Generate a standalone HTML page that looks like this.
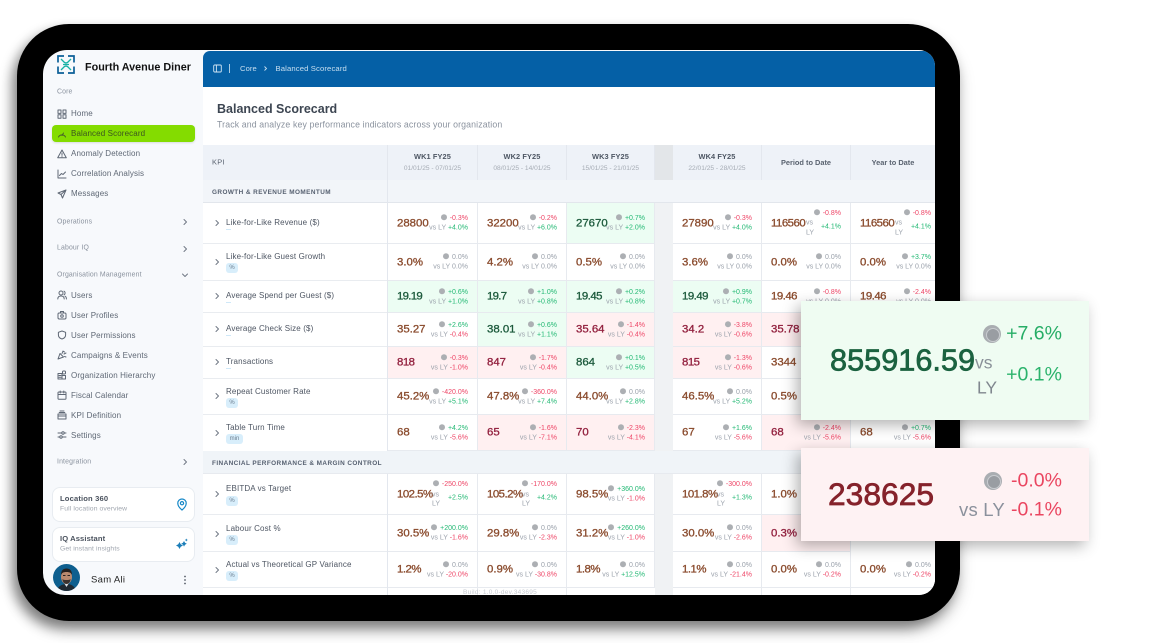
<!DOCTYPE html>
<html lang="en"><head><meta charset="utf-8"><title>Balanced Scorecard</title>
<style>
*{box-sizing:border-box}
html,body{margin:0;padding:0;background:#fff}
body{width:1163px;height:643px;overflow:hidden;position:relative;font-family:"Liberation Sans",sans-serif}
.abs,.frame,.screen,.t,.c,.v,.l,.card,.pop{position:absolute}
.frame{left:17px;top:24px;width:943px;height:597px;background:#000;border-radius:52px;box-shadow:-5px 7px 12px rgba(0,0,0,.42),0 10px 16px rgba(0,0,0,.18)}
.screen{left:43px;top:50px;width:892px;height:545px;background:#f7f9fc;border-radius:24px 16px 16px 22px;overflow:hidden;filter:blur(.3px)}
.bl{position:absolute;left:0;top:0;width:1163px;height:643px;filter:blur(.35px)}
.in{position:absolute;left:-43px;top:-50px;width:1163px;height:643px}
.t{white-space:nowrap;line-height:1;transform:translateY(-50%)}
.nav{font-size:8px;color:#5f6875;left:71px;letter-spacing:.12px;margin-top:.6px}
.sec{font-size:6.9px;color:#8a929e;left:57px;letter-spacing:.15px;margin-top:1.6px}
svg.i{position:absolute;fill:none;stroke:#5f6875;stroke-width:1;stroke-linecap:round;stroke-linejoin:round;width:10px;height:10px;left:57px}
svg.ch{position:absolute;fill:none;stroke:#717985;stroke-width:1;stroke-linecap:round;stroke-linejoin:round;width:8px;height:8px}
.card{left:52px;width:143px;height:35px;background:#fff;border:1px solid #e8ecf1;border-radius:8px}
.c{background:#fff;border-right:1px solid #e7eaef;border-bottom:1px solid #e7eaef}
.G{background:#ecfdf3}.R{background:#fff0f1}
.v{left:9px;top:50%;margin-top:.5px;transform:translateY(-50%);font-size:11.4px;font-weight:normal;-webkit-text-stroke:.32px currentColor;color:#8a4b2d;line-height:1;white-space:nowrap}
.G .v{color:#1c5a3c}.R .v{color:#93213f}
.v.o{letter-spacing:-.5px}
.l{right:9px;transform:translateY(-50%);font-size:7px;line-height:1;white-space:nowrap;color:#9aa1ab}
.a{top:calc(50% - 5px)}.b{top:calc(50% + 5px)}
.l b{font-weight:normal}.l i{display:inline-block;width:6px;height:6px;border-radius:50%;background:#acafb3;margin-right:3px;vertical-align:-.5px}
.n{color:#a0a6af}.g{color:#22b873}.r{color:#ee4566}
.w .a{top:calc(50% - 10px)}.w .b{top:calc(50% + 4px)}
.ly{transform:translateY(-50%);position:absolute;font-size:7px;color:#9aa1ab;line-height:1;left:44px}
.hd{background:#eef2f8;border-right:1px solid #e3e7ee;text-align:center;top:145px;height:35px}
.hd p{margin:0;position:absolute;left:0;right:0;line-height:1}
.h1{font-size:7.4px;font-weight:bold;color:#4d5663;top:8px;letter-spacing:.1px}
.h2{font-size:6.6px;color:#a6acb5;top:21px}
.h3{font-size:7.4px;font-weight:bold;color:#5a6370;top:14px}
.kpi{font-size:8px;color:#4e5663;left:226px;letter-spacing:.14px;margin-top:.5px}
.badge{position:absolute;left:226px;width:12px;height:10px;border-radius:3px;background:#d8eefb;color:#6a7c8e;font-size:6px;line-height:10px;text-align:center}
.sl{position:absolute;left:226px;width:5px;height:1px;background:#cfe8f8}
.gh{font-size:6.4px;font-weight:bold;color:#566070;left:212px;letter-spacing:.43px;margin-top:1px}
.pop{left:801px;width:288px;box-shadow:-4px 5px 14px rgba(0,0,0,.3)}
.pv{font-weight:normal;-webkit-text-stroke:.7px currentColor;line-height:1}
.pd{width:18px;height:18px;border-radius:50%;background:#a9adb1;position:absolute}
.pd:after{content:"";position:absolute;left:3px;top:3px;width:12px;height:12px;border-radius:50%;border:1.5px solid #c9ccd0;background:#999da2}
</style></head><body>
<div class="frame"></div>
<div class="screen"><div class="in">

<!-- logo -->
<svg class="abs" style="left:56px;top:54px" width="20" height="21" viewBox="0 0 20 21" fill="none" stroke-width="1.7">
<path d="M8 2H2v6.5M12 2h6v6.5M2 12.5V19h6M18 12.5V19h-6" stroke="#0b5f98"/>
<path d="M5 5l4 4M15 5l-4 4M5 16l4-4M15 16l-4-4M7 10.5h6M10 8v5" stroke="#19b3a4" stroke-width="1.3"/>
</svg>
<div class="t" style="left:85px;top:67.5px;font-size:10.8px;font-weight:bold;color:#111">Fourth Avenue Diner</div>

<div class="t sec" style="top:91px">Core</div>
<svg class="i" style="top:108.5px" viewBox="0 0 10 10"><rect x="1" y="1" width="3" height="3.4"/><rect x="6" y="1" width="3" height="3.4"/><rect x="1" y="5.8" width="3" height="3.4"/><rect x="6" y="5.8" width="3" height="3.4"/></svg>
<div class="t nav" style="top:113.5px">Home</div>
<div class="abs" style="left:52px;top:125px;width:143px;height:17px;background:#84dc00;border-radius:4px;box-shadow:0 1px 2px rgba(0,0,0,.12)"></div>
<svg class="i" style="top:128.5px;stroke:#48612a" viewBox="0 0 10 10"><path d="M1.5 8A4 4 0 0 1 8.5 8M5 6.5l1.5-2.5"/></svg>
<div class="t nav" style="top:133px;color:#3c5520">Balanced Scorecard</div>
<svg class="i" style="top:148.5px" viewBox="0 0 10 10"><path d="M5 1L9.3 8.8H.7zM5 4v2.4M5 7.6v.1"/></svg>
<div class="t nav" style="top:153.5px">Anomaly Detection</div>
<svg class="i" style="top:168.5px" viewBox="0 0 10 10"><path d="M1 1v8h8M2.5 6.5l2-2 1.5 1L8.5 3"/></svg>
<div class="t nav" style="top:173.5px">Correlation Analysis</div>
<svg class="i" style="top:188.5px" viewBox="0 0 10 10"><path d="M9 1L1 4l3 1.5L5.5 9zM4 5.5L9 1"/></svg>
<div class="t nav" style="top:193.5px">Messages</div>

<div class="t sec" style="top:221px">Operations</div>
<svg class="ch" style="left:181px;top:218px" viewBox="0 0 8 8"><path d="M3 1.5L5.500 4 3 6.500"/></svg>
<div class="t sec" style="top:247.5px">Labour IQ</div>
<svg class="ch" style="left:181px;top:244.5px" viewBox="0 0 8 8"><path d="M3 1.500L5.500 4 3 6.500"/></svg>
<div class="t sec" style="top:274px">Organisation Management</div>
<svg class="ch" style="left:181px;top:271px" viewBox="0 0 8 8"><path d="M1.500 3L4 5.500 6.500 3"/></svg>

<svg class="i" style="top:290px" viewBox="0 0 10 10"><circle cx="4" cy="3" r="2"/><path d="M.8 9c0-2 1.400-3 3.200-3s3.200 1 3.200 3M7 1.200a2 2 0 0 1 0 3.600M8 6.200c1 .4 1.400 1.400 1.400 2.800"/></svg>
<div class="t nav" style="top:295px">Users</div>
<svg class="i" style="top:310px" viewBox="0 0 10 10"><rect x="1" y="3" width="8" height="6" rx="1.200"/><circle cx="5" cy="6" r="1.300"/><path d="M3.500 3V1.500h3V3"/></svg>
<div class="t nav" style="top:315px">User Profiles</div>
<svg class="i" style="top:330px" viewBox="0 0 10 10"><path d="M5 1l3.600 1.300V5c0 2.200-1.600 3.400-3.600 4-2-.6-3.600-1.800-3.600-4V2.300z"/></svg>
<div class="t nav" style="top:335px">User Permissions</div>
<svg class="i" style="top:350px" viewBox="0 0 10 10"><path d="M1 9l2-5.500L6.500 7zM5 3.500L6 1M7 4l2-1M7.500 6.500l1.500.5M6.500 1.500l1 .5"/></svg>
<div class="t nav" style="top:355px">Campaigns &amp; Events</div>
<svg class="i" style="top:370px" viewBox="0 0 10 10"><rect x="1" y="3.500" width="4" height="5.500"/><rect x="5" y="5.500" width="3.500" height="3.500"/><rect x="5.500" y="1" width="3" height="3" rx="1"/><path d="M2 5.500h2M2 7.300h2"/></svg>
<div class="t nav" style="top:375px">Organization Hierarchy</div>
<svg class="i" style="top:390px" viewBox="0 0 10 10"><rect x="1" y="2" width="8" height="7.200" rx=".8"/><path d="M1 4.500h8M3.200 1v2M6.800 1v2"/></svg>
<div class="t nav" style="top:395px">Fiscal Calendar</div>
<svg class="i" style="top:410px" viewBox="0 0 10 10"><rect x="1" y="4" width="8" height="5"/><path d="M2.200 2.500h5.600M3 1h4M1 6h8"/></svg>
<div class="t nav" style="top:415px">KPI Definition</div>
<svg class="i" style="top:430px" viewBox="0 0 10 10"><path d="M1 3h3.500M7.500 3H9M1 7h1.500M5.500 7H9"/><circle cx="6" cy="3" r="1.200"/><circle cx="4" cy="7" r="1.200"/></svg>
<div class="t nav" style="top:435px">Settings</div>
<div class="t sec" style="top:461px">Integration</div>
<svg class="ch" style="left:181px;top:458px" viewBox="0 0 8 8"><path d="M3 1.500L5.500 4 3 6.500"/></svg>

<div class="card" style="top:487px"></div>
<div class="t" style="left:60px;top:498.500px;font-size:7.600px;font-weight:bold;color:#4a525e;letter-spacing:.15px">Location 360</div>
<div class="t" style="left:60px;top:510px;font-size:6.800px;color:#a0a6af;letter-spacing:.1px">Full location overview</div>
<svg class="abs" style="left:176px;top:498px" width="12" height="13" viewBox="0 0 12 13" fill="none" stroke="#1487c7" stroke-width="1.200"><path d="M6 12C3 9.500 1.800 7.500 1.800 5.200a4.200 4.200 0 0 1 8.400 0C10.200 7.500 9 9.500 6 12z"/><circle cx="6" cy="5.200" r="1.600"/></svg>
<div class="card" style="top:527px"></div>
<div class="t" style="left:60px;top:538.500px;font-size:7.600px;font-weight:bold;color:#4a525e;letter-spacing:.1px">IQ Assistant</div>
<div class="t" style="left:60px;top:550px;font-size:6.800px;color:#a0a6af;letter-spacing:.1px">Get instant insights</div>
<svg class="abs" style="left:176px;top:538px" width="12" height="12" viewBox="0 0 12 12" fill="#1a7db8"><path d="M3.500 4l1.200 2.300L7 7.500 4.700 8.700 3.500 11 2.300 8.700 0 7.500l2.300-1.200z"/><path d="M8 3l1 1.800 1.800 1-1.800 1L8 8.600 7 6.800l-1.800-1 1.800-1z"/><path d="M10.300 .5l.5 1 1 .5-1 .5-.5 1-.5-1-1-.5 1-.5z"/></svg>

<svg class="abs" style="left:53px;top:564px" width="27" height="27" viewBox="0 0 27 27"><defs><clipPath id="av"><circle cx="13.500" cy="13.500" r="13.500"/></clipPath></defs><g clip-path="url(#av)"><rect width="27" height="27" fill="#0e5f8f"/><path d="M4 27c1-5 5-7 9.500-7s8.500 2 9.500 7z" fill="#1f2933"/><path d="M11 19l2.500 4 2.500-4z" fill="#d9dde2"/><ellipse cx="13.500" cy="13" rx="5.500" ry="7" fill="#b98a6f"/><path d="M8 11c0-5 2.500-6.500 5.500-6.500S19 6 19 11c-1-2-2-3-5.500-3S9 9 8 11z" fill="#26211f"/><path d="M9.500 15c1 1 2 1 4 1s3 0 4-1c0 3-2 5-4 5s-4-2-4-5z" fill="#3b3230"/><path d="M10 11.500h2.500M14.500 11.500H17" stroke="#2a2220" stroke-width="1"/></g></svg>
<div class="t" style="left:91px;top:580px;font-size:9.500px;color:#222;letter-spacing:.3px">Sam Ali</div>
<svg class="abs" style="left:183px;top:575px" width="4" height="10" viewBox="0 0 4 10" fill="#555c67"><circle cx="2" cy="1.500" r=".9"/><circle cx="2" cy="5" r=".9"/><circle cx="2" cy="8.500" r=".9"/></svg>

<!-- main -->
<div class="abs" style="left:203px;top:86px;width:732px;height:60px;background:#fff"></div>
<div class="abs" style="left:203px;top:51px;width:732px;height:36px;background:#0560a6;border-radius:7px 0 0 0"></div>
<svg class="abs" style="left:213px;top:63.500px" width="9" height="9" viewBox="0 0 9 9" fill="none" stroke="#d3e6f4" stroke-width=".9"><rect x=".7" y="1" width="7.600" height="7" rx="1"/><path d="M3.400 1v7"/></svg>
<div class="abs" style="left:229px;top:64px;width:1px;height:9px;background:#a9cbe4"></div>
<div class="t" style="left:240px;top:68.500px;font-size:7.600px;color:#c8dff0;letter-spacing:.1px">Core</div>
<svg class="abs" style="left:262px;top:65px" width="7" height="7" viewBox="0 0 7 7" fill="none" stroke="#c8dff0" stroke-width=".9"><path d="M2.500 1.500L4.500 3.500 2.500 5.500"/></svg>
<div class="t" style="left:275.500px;top:68.500px;font-size:7.700px;color:#c8dff0;letter-spacing:.12px">Balanced Scorecard</div>
<div class="t" style="left:217px;top:109px;font-size:12.500px;font-weight:bold;color:#3d4652">Balanced Scorecard</div>
<div class="t" style="left:217px;top:125px;font-size:8.750px;color:#8a929e;letter-spacing:.13px">Track and analyze key performance indicators across your organization</div>

<!-- table background -->
<div class="abs" style="left:203px;top:145px;width:732px;height:35px;background:#eef2f8"></div>
<div class="abs" style="left:203px;top:180px;width:732px;height:23px;background:#f2f5f9;border-bottom:1px solid #e2e6ec"></div>
<div class="abs" style="left:203px;top:451px;width:732px;height:23px;background:#f0f4f8;border-bottom:1px solid #e7eaef"></div>
<div class="abs" style="left:203px;top:203px;width:184px;height:248px;background:#fff"></div>
<div class="abs" style="left:203px;top:474px;width:732px;height:121px;background:#fff"></div>
<div class="abs" style="left:387px;top:145px;width:1px;height:306px;background:#e3e7ee"></div>
<div class="abs" style="left:387px;top:474px;width:1px;height:121px;background:#e3e7ee"></div>
<div class="abs" style="left:655px;top:145px;width:18px;height:35px;background:#e3e6e9"></div>
<div class="abs" style="left:655px;top:203px;width:18px;height:248px;background:#f0f2f4"></div>
<div class="abs" style="left:655px;top:474px;width:18px;height:121px;background:#f0f2f4"></div>

<div class="t" style="left:212px;top:162px;font-size:7.400px;color:#5a6370;letter-spacing:.3px">KPI</div>
<div class="abs hd" style="left:388px;width:90px"><p class="h1">WK1 FY25</p><p class="h2">01/01/25 - 07/01/25</p></div>
<div class="abs hd" style="left:478px;width:89px"><p class="h1">WK2 FY25</p><p class="h2">08/01/25 - 14/01/25</p></div>
<div class="abs hd" style="left:567px;width:88px"><p class="h1">WK3 FY25</p><p class="h2">15/01/25 - 21/01/25</p></div>
<div class="abs hd" style="left:673px;width:89px"><p class="h1">WK4 FY25</p><p class="h2">22/01/25 - 28/01/25</p></div>
<div class="abs hd" style="left:762px;width:89px"><p class="h3">Period to Date</p></div>
<div class="abs hd" style="left:851px;width:84px;border-right:0"><p class="h3">Year to Date</p></div>
<div class="t gh" style="top:192px">GROWTH &amp; REVENUE MOMENTUM</div>
<div class="t gh" style="top:463px">FINANCIAL PERFORMANCE &amp; MARGIN CONTROL</div>

<!-- kpi column -->
<div class="abs" style="left:203px;top:243px;width:184px;height:1px;background:#e9ecf0"></div>
<div class="abs" style="left:203px;top:280px;width:184px;height:1px;background:#e9ecf0"></div>
<div class="abs" style="left:203px;top:312px;width:184px;height:1px;background:#e9ecf0"></div>
<div class="abs" style="left:203px;top:346px;width:184px;height:1px;background:#e9ecf0"></div>
<div class="abs" style="left:203px;top:378px;width:184px;height:1px;background:#e9ecf0"></div>
<div class="abs" style="left:203px;top:414px;width:184px;height:1px;background:#e9ecf0"></div>
<div class="abs" style="left:203px;top:514px;width:184px;height:1px;background:#e9ecf0"></div>
<div class="abs" style="left:203px;top:551px;width:184px;height:1px;background:#e9ecf0"></div>
<div class="abs" style="left:203px;top:587px;width:184px;height:1px;background:#e9ecf0"></div>

<svg class="ch" style="left:213px;top:219px" viewBox="0 0 8 8"><path d="M3 1.500L5.500 4 3 6.500"/></svg><div class="t kpi" style="top:222px">Like-for-Like Revenue ($)</div><div class="sl" style="top:229px"></div>
<svg class="ch" style="left:213px;top:258px" viewBox="0 0 8 8"><path d="M3 1.500L5.500 4 3 6.500"/></svg><div class="t kpi" style="top:256.500px">Like-for-Like Guest Growth</div><div class="badge" style="top:263px">%</div>
<svg class="ch" style="left:213px;top:292px" viewBox="0 0 8 8"><path d="M3 1.500L5.500 4 3 6.500"/></svg><div class="t kpi" style="top:295px">Average Spend per Guest ($)</div><div class="sl" style="top:302px"></div>
<svg class="ch" style="left:213px;top:325px" viewBox="0 0 8 8"><path d="M3 1.500L5.500 4 3 6.500"/></svg><div class="t kpi" style="top:328px">Average Check Size ($)</div><div class="sl" style="top:335px"></div>
<svg class="ch" style="left:213px;top:358px" viewBox="0 0 8 8"><path d="M3 1.500L5.500 4 3 6.500"/></svg><div class="t kpi" style="top:361px">Transactions</div><div class="sl" style="top:368px"></div>
<svg class="ch" style="left:213px;top:392px" viewBox="0 0 8 8"><path d="M3 1.500L5.500 4 3 6.500"/></svg><div class="t kpi" style="top:391.500px">Repeat Customer Rate</div><div class="badge" style="top:398px">%</div>
<svg class="ch" style="left:213px;top:429px" viewBox="0 0 8 8"><path d="M3 1.500L5.500 4 3 6.500"/></svg><div class="t kpi" style="top:427px">Table Turn Time</div><div class="badge" style="top:434px;width:17px">min</div>
<svg class="ch" style="left:213px;top:490px" viewBox="0 0 8 8"><path d="M3 1.500L5.500 4 3 6.500"/></svg><div class="t kpi" style="top:488.500px">EBITDA vs Target</div><div class="badge" style="top:496px">%</div>
<svg class="ch" style="left:213px;top:530px" viewBox="0 0 8 8"><path d="M3 1.500L5.500 4 3 6.500"/></svg><div class="t kpi" style="top:528px">Labour Cost %</div><div class="badge" style="top:535px">%</div>
<svg class="ch" style="left:213px;top:566px" viewBox="0 0 8 8"><path d="M3 1.500L5.500 4 3 6.500"/></svg><div class="t kpi" style="top:564px">Actual vs Theoretical GP Variance</div><div class="badge" style="top:571px">%</div>

<!-- row 1 -->
<div class="c" style="left:388px;top:203px;width:90px;height:41px"><div class="v">28800</div><div class="l a"><i></i><b class="r">-0.3%</b></div><div class="l b">vs LY <b class="g">+4.0%</b></div></div>
<div class="c" style="left:478px;top:203px;width:89px;height:41px"><div class="v">32200</div><div class="l a"><i></i><b class="r">-0.2%</b></div><div class="l b">vs LY <b class="g">+6.0%</b></div></div>
<div class="c G" style="left:567px;top:203px;width:88px;height:41px"><div class="v">27670</div><div class="l a"><i></i><b class="g">+0.7%</b></div><div class="l b">vs LY <b class="g">+2.0%</b></div></div>
<div class="c" style="left:673px;top:203px;width:89px;height:41px"><div class="v">27890</div><div class="l a"><i></i><b class="r">-0.3%</b></div><div class="l b">vs LY <b class="g">+4.0%</b></div></div>
<div class="c w" style="left:762px;top:203px;width:89px;height:41px"><div class="v o">116560</div><div class="l a"><i></i><b class="r">-0.8%</b></div><div class="l b"><b class="g">+4.1%</b></div><span class="ly" style="top:20px">vs</span><span class="ly" style="top:29.500px">LY</span></div>
<div class="c w" style="left:851px;top:203px;width:84px;height:41px;border-right:0"><div class="v o">116560</div><div class="l a" style="right:4px"><i></i><b class="r">-0.8%</b></div><div class="l b" style="right:4px"><b class="g">+4.1%</b></div><span class="ly" style="top:20px">vs</span><span class="ly" style="top:29.500px">LY</span></div>

<!-- row 2 -->
<div class="c" style="left:388px;top:244px;width:90px;height:37px"><div class="v">3.0%</div><div class="l a"><i></i>0.0%</div><div class="l b">vs LY 0.0%</div></div>
<div class="c" style="left:478px;top:244px;width:89px;height:37px"><div class="v">4.2%</div><div class="l a"><i></i>0.0%</div><div class="l b">vs LY 0.0%</div></div>
<div class="c" style="left:567px;top:244px;width:88px;height:37px"><div class="v">0.5%</div><div class="l a"><i></i>0.0%</div><div class="l b">vs LY 0.0%</div></div>
<div class="c" style="left:673px;top:244px;width:89px;height:37px"><div class="v">3.6%</div><div class="l a"><i></i>0.0%</div><div class="l b">vs LY 0.0%</div></div>
<div class="c" style="left:762px;top:244px;width:89px;height:37px"><div class="v">0.0%</div><div class="l a"><i></i>0.0%</div><div class="l b">vs LY 0.0%</div></div>
<div class="c" style="left:851px;top:244px;width:84px;height:37px;border-right:0"><div class="v">0.0%</div><div class="l a" style="right:4px"><i></i><b class="g">+3.7%</b></div><div class="l b" style="right:4px">vs LY 0.0%</div></div>

<!-- row 3 -->
<div class="c G" style="left:388px;top:281px;width:90px;height:32px"><div class="v" style="letter-spacing:-.7px">19.19</div><div class="l a"><i></i><b class="g">+0.6%</b></div><div class="l b">vs LY <b class="g">+1.0%</b></div></div>
<div class="c G" style="left:478px;top:281px;width:89px;height:32px"><div class="v" style="letter-spacing:-.7px">19.7</div><div class="l a"><i></i><b class="g">+1.0%</b></div><div class="l b">vs LY <b class="g">+0.8%</b></div></div>
<div class="c G" style="left:567px;top:281px;width:88px;height:32px"><div class="v o">19.45</div><div class="l a"><i></i><b class="g">+0.2%</b></div><div class="l b">vs LY <b class="g">+0.8%</b></div></div>
<div class="c G" style="left:673px;top:281px;width:89px;height:32px"><div class="v o">19.49</div><div class="l a"><i></i><b class="g">+0.9%</b></div><div class="l b">vs LY <b class="g">+0.7%</b></div></div>
<div class="c" style="left:762px;top:281px;width:89px;height:32px"><div class="v o">19.46</div><div class="l a"><i></i><b class="r">-0.8%</b></div><div class="l b">vs LY 0.0%</div></div>
<div class="c" style="left:851px;top:281px;width:84px;height:32px;border-right:0"><div class="v o">19.46</div><div class="l a" style="right:4px"><i></i><b class="r">-2.4%</b></div><div class="l b" style="right:4px">vs LY 0.0%</div></div>

<!-- row 4 -->
<div class="c" style="left:388px;top:313px;width:90px;height:34px"><div class="v">35.27</div><div class="l a"><i></i><b class="g">+2.6%</b></div><div class="l b">vs LY <b class="r">-0.4%</b></div></div>
<div class="c G" style="left:478px;top:313px;width:89px;height:34px"><div class="v">38.01</div><div class="l a"><i></i><b class="g">+0.6%</b></div><div class="l b">vs LY <b class="g">+1.1%</b></div></div>
<div class="c R" style="left:567px;top:313px;width:88px;height:34px"><div class="v">35.64</div><div class="l a"><i></i><b class="r">-1.4%</b></div><div class="l b">vs LY <b class="r">-0.4%</b></div></div>
<div class="c R" style="left:673px;top:313px;width:89px;height:34px"><div class="v">34.2</div><div class="l a"><i></i><b class="r">-3.8%</b></div><div class="l b">vs LY <b class="r">-0.6%</b></div></div>
<div class="c R" style="left:762px;top:313px;width:89px;height:34px"><div class="v">35.78</div></div>

<!-- row 5 -->
<div class="c R" style="left:388px;top:347px;width:90px;height:32px"><div class="v o">818</div><div class="l a"><i></i><b class="r">-0.3%</b></div><div class="l b">vs LY <b class="r">-1.0%</b></div></div>
<div class="c R" style="left:478px;top:347px;width:89px;height:32px"><div class="v">847</div><div class="l a"><i></i><b class="r">-1.7%</b></div><div class="l b">vs LY <b class="r">-0.4%</b></div></div>
<div class="c G" style="left:567px;top:347px;width:88px;height:32px"><div class="v">864</div><div class="l a"><i></i><b class="g">+0.1%</b></div><div class="l b">vs LY <b class="g">+0.5%</b></div></div>
<div class="c R" style="left:673px;top:347px;width:89px;height:32px"><div class="v o">815</div><div class="l a"><i></i><b class="r">-1.3%</b></div><div class="l b">vs LY <b class="r">-0.6%</b></div></div>
<div class="c" style="left:762px;top:347px;width:89px;height:32px"><div class="v">3344</div></div>

<!-- row 6 -->
<div class="c" style="left:388px;top:379px;width:90px;height:36px"><div class="v">45.2%</div><div class="l a"><i></i><b class="r">-420.0%</b></div><div class="l b">vs LY <b class="g">+5.1%</b></div></div>
<div class="c" style="left:478px;top:379px;width:89px;height:36px"><div class="v">47.8%</div><div class="l a"><i></i><b class="r">-360.0%</b></div><div class="l b">vs LY <b class="g">+7.4%</b></div></div>
<div class="c" style="left:567px;top:379px;width:88px;height:36px"><div class="v">44.0%</div><div class="l a"><i></i>0.0%</div><div class="l b">vs LY <b class="g">+2.8%</b></div></div>
<div class="c" style="left:673px;top:379px;width:89px;height:36px"><div class="v">46.5%</div><div class="l a"><i></i>0.0%</div><div class="l b">vs LY <b class="g">+5.2%</b></div></div>
<div class="c" style="left:762px;top:379px;width:89px;height:36px"><div class="v">0.5%</div></div>

<!-- row 7 -->
<div class="c" style="left:388px;top:415px;width:90px;height:36px"><div class="v">68</div><div class="l a"><i></i><b class="g">+4.2%</b></div><div class="l b">vs LY <b class="r">-5.6%</b></div></div>
<div class="c R" style="left:478px;top:415px;width:89px;height:36px"><div class="v">65</div><div class="l a"><i></i><b class="r">-1.6%</b></div><div class="l b">vs LY <b class="r">-7.1%</b></div></div>
<div class="c R" style="left:567px;top:415px;width:88px;height:36px"><div class="v">70</div><div class="l a"><i></i><b class="r">-2.3%</b></div><div class="l b">vs LY <b class="r">-4.1%</b></div></div>
<div class="c" style="left:673px;top:415px;width:89px;height:36px"><div class="v">67</div><div class="l a"><i></i><b class="g">+1.6%</b></div><div class="l b">vs LY <b class="r">-5.6%</b></div></div>
<div class="c R" style="left:762px;top:415px;width:89px;height:36px"><div class="v">68</div><div class="l a"><i></i><b class="r">-2.4%</b></div><div class="l b">vs LY <b class="r">-5.6%</b></div></div>
<div class="c" style="left:851px;top:415px;width:84px;height:36px;border-right:0"><div class="v">68</div><div class="l a" style="right:4px"><i></i><b class="g">+0.7%</b></div><div class="l b" style="right:4px">vs LY <b class="r">-5.6%</b></div></div>

<!-- row 8 -->
<div class="c w" style="left:388px;top:474px;width:90px;height:41px"><div class="v o">102.5%</div><div class="l a"><i></i><b class="r">-250.0%</b></div><div class="l b"><b class="g">+2.5%</b></div><span class="ly" style="top:20.500px">vs</span><span class="ly" style="top:30px">LY</span></div>
<div class="c w" style="left:478px;top:474px;width:89px;height:41px"><div class="v o">105.2%</div><div class="l a"><i></i><b class="r">-170.0%</b></div><div class="l b"><b class="g">+4.2%</b></div><span class="ly" style="top:20.500px">vs</span><span class="ly" style="top:30px">LY</span></div>
<div class="c" style="left:567px;top:474px;width:88px;height:41px"><div class="v">98.5%</div><div class="l a"><i></i><b class="g">+360.0%</b></div><div class="l b">vs LY <b class="r">-1.0%</b></div></div>
<div class="c w" style="left:673px;top:474px;width:89px;height:41px"><div class="v o">101.8%</div><div class="l a"><i></i><b class="r">-300.0%</b></div><div class="l b"><b class="g">+1.3%</b></div><span class="ly" style="top:20.500px">vs</span><span class="ly" style="top:30px">LY</span></div>
<div class="c" style="left:762px;top:474px;width:89px;height:41px"><div class="v">1.0%</div></div>

<!-- row 9 -->
<div class="c" style="left:388px;top:515px;width:90px;height:37px"><div class="v">30.5%</div><div class="l a"><i></i><b class="g">+200.0%</b></div><div class="l b">vs LY <b class="r">-1.6%</b></div></div>
<div class="c" style="left:478px;top:515px;width:89px;height:37px"><div class="v">29.8%</div><div class="l a"><i></i>0.0%</div><div class="l b">vs LY <b class="r">-2.3%</b></div></div>
<div class="c" style="left:567px;top:515px;width:88px;height:37px"><div class="v">31.2%</div><div class="l a"><i></i><b class="g">+260.0%</b></div><div class="l b">vs LY <b class="r">-1.0%</b></div></div>
<div class="c" style="left:673px;top:515px;width:89px;height:37px"><div class="v">30.0%</div><div class="l a"><i></i>0.0%</div><div class="l b">vs LY <b class="r">-2.6%</b></div></div>
<div class="c R" style="left:762px;top:515px;width:89px;height:37px"><div class="v">0.3%</div></div>

<!-- row 10 -->
<div class="c" style="left:388px;top:552px;width:90px;height:36px"><div class="v o">1.2%</div><div class="l a"><i></i>0.0%</div><div class="l b">vs LY <b class="r">-20.0%</b></div></div>
<div class="c" style="left:478px;top:552px;width:89px;height:36px"><div class="v">0.9%</div><div class="l a"><i></i>0.0%</div><div class="l b">vs LY <b class="r">-30.8%</b></div></div>
<div class="c" style="left:567px;top:552px;width:88px;height:36px"><div class="v o">1.8%</div><div class="l a"><i></i>0.0%</div><div class="l b">vs LY <b class="g">+12.5%</b></div></div>
<div class="c" style="left:673px;top:552px;width:89px;height:36px"><div class="v o">1.1%</div><div class="l a"><i></i>0.0%</div><div class="l b">vs LY <b class="r">-21.4%</b></div></div>
<div class="c" style="left:762px;top:552px;width:89px;height:36px"><div class="v">0.0%</div><div class="l a"><i></i>0.0%</div><div class="l b">vs LY <b class="r">-0.2%</b></div></div>
<div class="c" style="left:851px;top:552px;width:84px;height:36px;border-right:0"><div class="v">0.0%</div><div class="l a" style="right:4px"><i></i>0.0%</div><div class="l b" style="right:4px">vs LY <b class="r">-0.2%</b></div></div>

<div class="abs" style="left:477px;top:588px;width:1px;height:7px;background:#e7eaef"></div>
<div class="abs" style="left:566px;top:588px;width:1px;height:7px;background:#e7eaef"></div>
<div class="abs" style="left:761px;top:588px;width:1px;height:7px;background:#e7eaef"></div>
<div class="abs" style="left:850px;top:588px;width:1px;height:7px;background:#e7eaef"></div>
<div class="t" style="left:463px;top:592.500px;font-size:6.500px;color:#c6cad0;letter-spacing:.25px">Build: 1.0.0-dev.343695</div>
</div></div>

<!-- popups -->
<div class="bl">
<div class="pop" style="top:301px;height:119px;background:#effcf2"></div>
<div class="t pv" style="left:830px;top:360.500px;font-size:30.700px;color:#1b6240">855916.59</div>
<div class="t" style="left:975px;top:363px;font-size:17.500px;color:#8a9199">vs</div>
<div class="t" style="left:977px;top:388px;font-size:17.500px;color:#80878f">LY</div>
<div class="pd" style="left:983px;top:325px"></div>
<div class="t" style="right:101px;top:334px;font-size:19.500px;color:#26ad66">+7.6%</div>
<div class="t" style="right:101px;top:375px;font-size:19.500px;color:#2bb36c">+0.1%</div>

<div class="pop" style="top:448px;height:93px;background:#fef2f3"></div>
<div class="t pv" style="left:828px;top:495px;font-size:31.800px;color:#85222b">238625</div>
<div class="pd" style="left:984px;top:472px"></div>
<div class="t" style="right:101px;top:480.500px;font-size:19.500px;color:#ea4660">-0.0%</div>
<div class="t" style="left:959px;top:510px;font-size:18.500px;color:#8b919c;letter-spacing:.2px">vs LY</div>
<div class="t" style="right:101px;top:509.500px;font-size:19.500px;color:#ea4660">-0.1%</div>
</div>
</body></html>
